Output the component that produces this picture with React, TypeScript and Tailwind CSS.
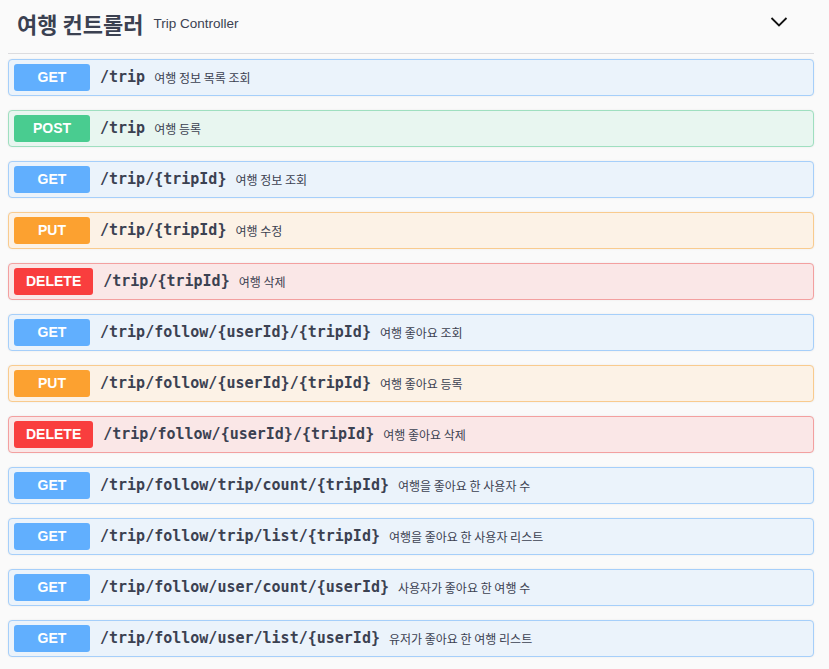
import React from "react";

type Method = "GET" | "POST" | "PUT" | "DELETE";

const styles: Record<Method, { block: string; badge: string }> = {
  GET: {
    block: "bg-[#ebf3fb] border-[#a6cffa]",
    badge: "bg-[#61affe]",
  },
  POST: {
    block: "bg-[#e8f6f0] border-[#9fdfc0]",
    badge: "bg-[#49cc90]",
  },
  PUT: {
    block: "bg-[#fcf2e6] border-[#f9cb8e]",
    badge: "bg-[#fca130]",
  },
  DELETE: {
    block: "bg-[#fae7e7] border-[#f3a0a0]",
    badge: "bg-[#f93e3e]",
  },
};

const ops: { m: Method; path: string; desc: string }[] = [
  { m: "GET", path: "/trip", desc: "여행 정보 목록 조회" },
  { m: "POST", path: "/trip", desc: "여행 등록" },
  { m: "GET", path: "/trip/{tripId}", desc: "여행 정보 조회" },
  { m: "PUT", path: "/trip/{tripId}", desc: "여행 수정" },
  { m: "DELETE", path: "/trip/{tripId}", desc: "여행 삭제" },
  { m: "GET", path: "/trip/follow/{userId}/{tripId}", desc: "여행 좋아요 조회" },
  { m: "PUT", path: "/trip/follow/{userId}/{tripId}", desc: "여행 좋아요 등록" },
  { m: "DELETE", path: "/trip/follow/{userId}/{tripId}", desc: "여행 좋아요 삭제" },
  { m: "GET", path: "/trip/follow/trip/count/{tripId}", desc: "여행을 좋아요 한 사용자 수" },
  { m: "GET", path: "/trip/follow/trip/list/{tripId}", desc: "여행을 좋아요 한 사용자 리스트" },
  { m: "GET", path: "/trip/follow/user/count/{userId}", desc: "사용자가 좋아요 한 여행 수" },
  { m: "GET", path: "/trip/follow/user/list/{userId}", desc: "유저가 좋아요 한 여행 리스트" },
];

export default function App() {
  return (
    <div className="min-h-[669px] w-full bg-[#fafafa] text-[#3b4151]">
      <div className="ml-[8px] w-[806px]">
        <div className="flex h-[54px] items-center border-b border-[#dcdcdf] pl-[9px] pr-[26px] pb-[8px]">
          <span className="font-['Noto_Sans_CJK_KR',sans-serif] text-[22px] font-bold leading-none">
            여행 컨트롤러
          </span>
          <span className="ml-[10px] font-['Liberation_Sans',Arial,sans-serif] text-[13.5px] leading-none pt-[2px]">
            Trip Controller
          </span>
          <div className="flex-1" />
          <svg width="18" height="12" viewBox="0 0 18 12" className="mt-[-1px]">
            <polyline
              points="1.5,2 9,9.5 16.5,2"
              fill="none"
              stroke="#111"
              strokeWidth="1.8"
            />
          </svg>
        </div>
        <div className="flex flex-col gap-[14px] pt-[5px]">
          {ops.map((o, i) => (
            <div
              key={i}
              className={`flex h-[37px] items-center gap-[10px] rounded-[4px] border px-[5px] shadow-[0_0_2px_rgba(0,0,0,0.08)] ${styles[o.m].block}`}
            >
              <div
                className={`flex h-[27px] min-w-[76px] items-center justify-center rounded-[3px] px-[12px] font-['Liberation_Sans',Arial,sans-serif] text-[14px] font-bold text-white ${styles[o.m].badge}`}
              >
                {o.m}
              </div>
              <span className="font-['DejaVu_Sans_Mono',monospace] text-[15px] font-bold leading-none">
                {o.path}
              </span>
              <span className="font-['Noto_Sans_CJK_KR',sans-serif] text-[12px] leading-none text-[#3b4151] -ml-[1px]">
                {o.desc}
              </span>
            </div>
          ))}
        </div>
      </div>
    </div>
  );
}
